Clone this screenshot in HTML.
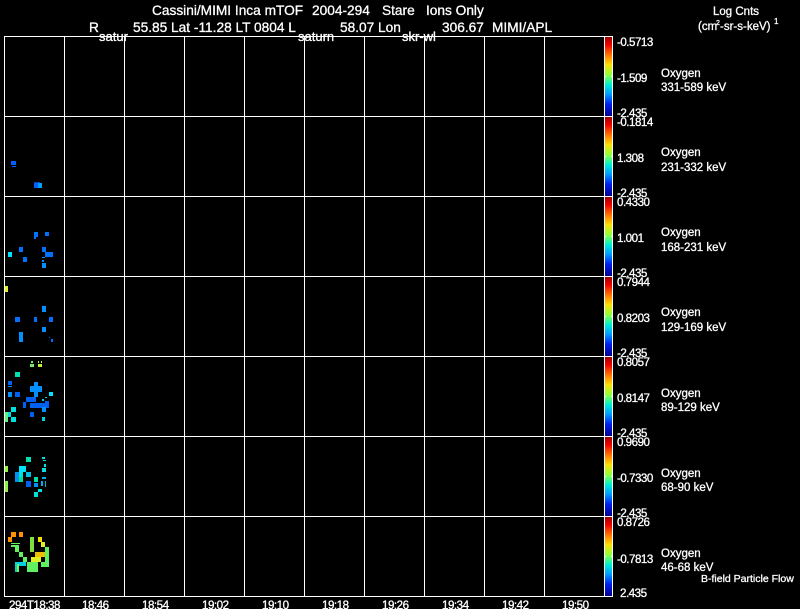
<!DOCTYPE html>
<html><head><meta charset="utf-8"><style>
html,body{margin:0;padding:0;background:#000;width:800px;height:609px;overflow:hidden}
svg{display:block}
text{font-family:"Liberation Sans",sans-serif;fill:#fff;font-size:11.5px;stroke:#fff;stroke-width:.3px}
.t{font-size:13.7px}
.u{font-size:13px}
.n{font-size:11.6px;letter-spacing:-.5px}
</style></head><body>
<svg width="800" height="609" viewBox="0 0 800 609" xmlns="http://www.w3.org/2000/svg">
<defs><linearGradient id="g" x1="0" y1="0" x2="0" y2="1">
<stop offset="0" stop-color="#a00000"/><stop offset=".1" stop-color="#f00000"/><stop offset=".22" stop-color="#ff7000"/><stop offset=".35" stop-color="#ffe000"/><stop offset=".48" stop-color="#90ff40"/><stop offset=".6" stop-color="#00f0d0"/><stop offset=".72" stop-color="#00a0ff"/><stop offset=".85" stop-color="#0020f0"/><stop offset="1" stop-color="#000090"/>
</linearGradient></defs>
<rect width="800" height="609" fill="#000"/>
<g fill="url(#g)">
<rect x="605" y="37" width="7" height="79"/><rect x="605" y="117" width="7" height="79"/><rect x="605" y="197" width="7" height="79"/><rect x="605" y="277" width="7" height="79"/><rect x="605" y="357" width="7" height="79"/><rect x="605" y="437" width="7" height="79"/><rect x="605" y="517" width="7" height="79"/>
</g>
<g fill="#fff">
<rect x="4" y="36" width="609" height="1"/><rect x="4" y="116" width="609" height="1"/><rect x="4" y="196" width="609" height="1"/><rect x="4" y="276" width="609" height="1"/><rect x="4" y="356" width="609" height="1"/><rect x="4" y="436" width="609" height="1"/><rect x="4" y="516" width="609" height="1"/><rect x="4" y="596" width="609" height="1"/>
<rect x="4" y="36" width="1" height="561"/><rect x="64" y="36" width="1" height="561"/><rect x="124" y="36" width="1" height="561"/><rect x="184" y="36" width="1" height="561"/><rect x="244" y="36" width="1" height="561"/><rect x="304" y="36" width="1" height="561"/><rect x="364" y="36" width="1" height="561"/><rect x="424" y="36" width="1" height="561"/><rect x="484" y="36" width="1" height="561"/><rect x="544" y="36" width="1" height="561"/><rect x="604" y="36" width="1" height="561"/><rect x="612" y="36" width="1" height="561"/>
<rect x="605" y="76" width="1" height="1"/><rect x="611" y="76" width="1" height="1"/><rect x="605" y="156" width="1" height="1"/><rect x="611" y="156" width="1" height="1"/><rect x="605" y="236" width="1" height="1"/><rect x="611" y="236" width="1" height="1"/><rect x="605" y="316" width="1" height="1"/><rect x="611" y="316" width="1" height="1"/><rect x="605" y="396" width="1" height="1"/><rect x="611" y="396" width="1" height="1"/><rect x="605" y="476" width="1" height="1"/><rect x="611" y="476" width="1" height="1"/><rect x="605" y="556" width="1" height="1"/><rect x="611" y="556" width="1" height="1"/>
</g>
<!-- panel 2 -->
<g fill="#0060ff"><rect x="11" y="161" width="5" height="4"/><rect x="12" y="166" width="4" height="1"/><rect x="34" y="183" width="4" height="5"/><rect x="34" y="182" width="6" height="1" fill="#0040d0"/></g>
<rect x="38" y="183" width="4" height="5" fill="#00a0ff"/>
<!-- panel 3 -->
<g fill="#0070ff"><rect x="34" y="232" width="4" height="5"/><rect x="34" y="237" width="2" height="2"/><rect x="45" y="232" width="4" height="4"/><rect x="19" y="247" width="4" height="5"/><rect x="42" y="247" width="4" height="5"/><rect x="45" y="252" width="8" height="5"/><rect x="23" y="257" width="4" height="5"/></g>
<rect x="8" y="252" width="4" height="5" fill="#00e0ff"/>
<g fill="#0090ff"><rect x="42" y="257" width="3" height="1"/><rect x="42" y="260" width="2" height="2"/><rect x="42" y="263" width="4" height="5"/></g>
<!-- panel 4 -->
<rect x="5" y="286" width="3" height="6" fill="#e0f020"/>
<g fill="#0090ff"><rect x="42" y="306" width="4" height="6"/><rect x="42" y="327" width="4" height="5"/><rect x="19" y="332" width="4" height="10"/></g>
<g fill="#0070ff"><rect x="15" y="317" width="5" height="5"/><rect x="34" y="317" width="3" height="5"/><rect x="49" y="317" width="4" height="5"/><rect x="51" y="339" width="2" height="3"/><rect x="49" y="337" width="1" height="1"/></g>
<!-- panel 5 -->
<g fill="#70f060"><rect x="30" y="364" width="4" height="3"/><rect x="31" y="361" width="2" height="2"/></g>
<g fill="#c0f040"><rect x="38" y="364" width="4" height="3"/><rect x="38" y="361" width="1" height="2"/><rect x="41" y="361" width="1" height="2"/></g>
<rect x="15" y="372" width="5" height="5" fill="#00e0b0"/>
<g fill="#0090ff"><rect x="34" y="382" width="4" height="5"/><rect x="30" y="386" width="12" height="6"/><rect x="34" y="392" width="4" height="5"/><rect x="8" y="392" width="4" height="5"/><rect x="8" y="386" width="4" height="1"/></g>
<g fill="#0060f0"><rect x="8" y="381" width="4" height="4"/><rect x="15" y="392" width="5" height="5"/><rect x="26" y="397" width="10" height="5"/><rect x="23" y="402" width="3" height="6"/><rect x="30" y="403" width="19" height="5"/><rect x="45" y="401" width="4" height="3"/><rect x="30" y="412" width="4" height="5"/></g>
<rect x="42" y="407" width="4" height="5" fill="#0090ff"/>
<rect x="49" y="392" width="4" height="4" fill="#00e0ff"/>
<g fill="#00d0e0"><rect x="42" y="417" width="3" height="4"/><rect x="45" y="397" width="2" height="1"/><rect x="42" y="399" width="2" height="2"/></g>
<g fill="#00e0e0"><rect x="11" y="407" width="5" height="5"/><rect x="8" y="412" width="3" height="5"/><rect x="11" y="417" width="5" height="5"/></g>
<rect x="5" y="412" width="3" height="10" fill="#60f080"/>
<!-- panel 6 -->
<rect x="26" y="457" width="5" height="5" fill="#00e0b0"/>
<rect x="5" y="466" width="3" height="6" fill="#90f040"/>
<rect x="5" y="481" width="3" height="11" fill="#90f040"/>
<rect x="19" y="466" width="7" height="6" fill="#00e0ff"/>
<rect x="15" y="472" width="4" height="10" fill="#0090f0"/>
<rect x="19" y="472" width="4" height="5" fill="#00e0e0"/>
<rect x="19" y="477" width="4" height="5" fill="#00e090"/>
<rect x="26" y="472" width="5" height="5" fill="#00c0e0"/>
<rect x="26" y="481" width="5" height="6" fill="#0060f0"/>
<rect x="34" y="477" width="4" height="5" fill="#00e0a0"/>
<rect x="34" y="483" width="4" height="4" fill="#0090ff"/>
<g fill="#00e0e0"><rect x="42" y="468" width="4" height="4"/><rect x="42" y="457" width="3" height="2"/><rect x="43" y="460" width="3" height="1"/><rect x="44" y="464" width="2" height="3"/><rect x="38" y="489" width="4" height="3"/><rect x="34" y="492" width="4" height="5"/></g>
<g fill="#00b0e0"><rect x="42" y="477" width="4" height="2"/><rect x="41" y="481" width="2" height="5"/><rect x="45" y="481" width="1" height="6"/></g>
<!-- panel 7 -->
<g fill="#ff9000"><rect x="11" y="532" width="5" height="5"/><rect x="8" y="537" width="4" height="5"/><rect x="19" y="532" width="4" height="5"/></g>
<rect x="30" y="537" width="4" height="15" fill="#80e040"/>
<rect x="38" y="537" width="4" height="5" fill="#f0e000"/>
<g fill="#60f060"><rect x="11" y="545" width="8" height="2"/><rect x="11" y="543" width="9" height="1"/><rect x="15" y="547" width="4" height="5"/><rect x="19" y="552" width="4" height="5"/><rect x="23" y="557" width="4" height="5"/><rect x="45" y="547" width="4" height="20"/><rect x="27" y="562" width="11" height="10"/><rect x="41" y="562" width="4" height="5"/></g>
<g fill="#e0f020"><rect x="41" y="542" width="4" height="5"/><rect x="31" y="557" width="10" height="5"/></g>
<rect x="35" y="552" width="10" height="5" fill="#f0c000"/>
<g fill="#00d0e0"><rect x="15" y="562" width="4" height="10"/><rect x="19" y="562" width="7" height="4"/></g>
<rect x="17" y="564" width="2" height="8" fill="#80f040"/>
<!-- text -->
<text class="t" x="152" y="15">Cassini/MIMI Inca mTOF</text><text class="t" x="312" y="15">2004-294</text><text class="t" x="382" y="15">Stare</text><text class="t" x="426" y="15">Ions Only</text>
<text class="t" x="89" y="32">R</text><text class="t" x="133" y="32">55.85 Lat -11.28 LT 0804 L</text><text class="t" x="340" y="32">58.07 Lon</text><text class="t" x="442" y="32">306.67</text><text class="t" x="492" y="32">MIMI/APL</text>
<text class="u" x="99" y="41">satur</text><text class="u" x="298" y="41">saturn</text><text class="u" x="402" y="41">skr-wl</text>
<text x="713" y="15">Log Cnts</text><text x="698" y="30">(cm</text><text x="716" y="25" style="font-size:7px">2</text><text x="720" y="30">-sr-s-keV)</text><text x="774" y="24" style="font-size:8px">1</text>
<text class="n" x="617" y="46">-0.5713</text><text class="n" x="617" y="82">-1.509</text><text class="n" x="617" y="117">-2.435</text>
<text class="n" x="617" y="126">-0.1814</text><text class="n" x="617" y="162">1.308</text><text class="n" x="617" y="197">-2.435</text>
<text class="n" x="617" y="206">0.4330</text><text class="n" x="617" y="242">1.001</text><text class="n" x="617" y="277">-2.435</text>
<text class="n" x="617" y="286">0.7944</text><text class="n" x="617" y="322">0.8203</text><text class="n" x="617" y="357">-2.435</text>
<text class="n" x="617" y="366">0.8057</text><text class="n" x="617" y="402">0.8147</text><text class="n" x="617" y="437">-2.435</text>
<text class="n" x="617" y="446">0.9690</text><text class="n" x="617" y="482">-0.7330</text><text class="n" x="617" y="517">-2.435</text>
<text class="n" x="617" y="526">0.8726</text><text class="n" x="617" y="563">-0.7813</text><text class="n" x="620" y="597">2.435</text>
<text x="661" y="77">Oxygen</text><text x="661" y="91">331-589 keV</text>
<text x="661" y="156">Oxygen</text><text x="661" y="171">231-332 keV</text>
<text x="661" y="236">Oxygen</text><text x="661" y="251">168-231 keV</text>
<text x="661" y="316">Oxygen</text><text x="661" y="331">129-169 keV</text>
<text x="661" y="397">Oxygen</text><text x="661" y="411">89-129 keV</text>
<text x="661" y="477">Oxygen</text><text x="661" y="491">68-90 keV</text>
<text x="661" y="557">Oxygen</text><text x="661" y="571">46-68 keV</text>
<text x="701" y="582" style="font-size:10.5px">B-field Particle Flow</text>
<text class="n" x="9" y="609">294T18:38</text><text class="n" x="82" y="609">18:46</text><text class="n" x="142" y="609">18:54</text><text class="n" x="202" y="609">19:02</text><text class="n" x="262" y="609">19:10</text><text class="n" x="322" y="609">19:18</text><text class="n" x="382" y="609">19:26</text><text class="n" x="442" y="609">19:34</text><text class="n" x="502" y="609">19:42</text><text class="n" x="562" y="609">19:50</text>
</svg>
</body></html>
